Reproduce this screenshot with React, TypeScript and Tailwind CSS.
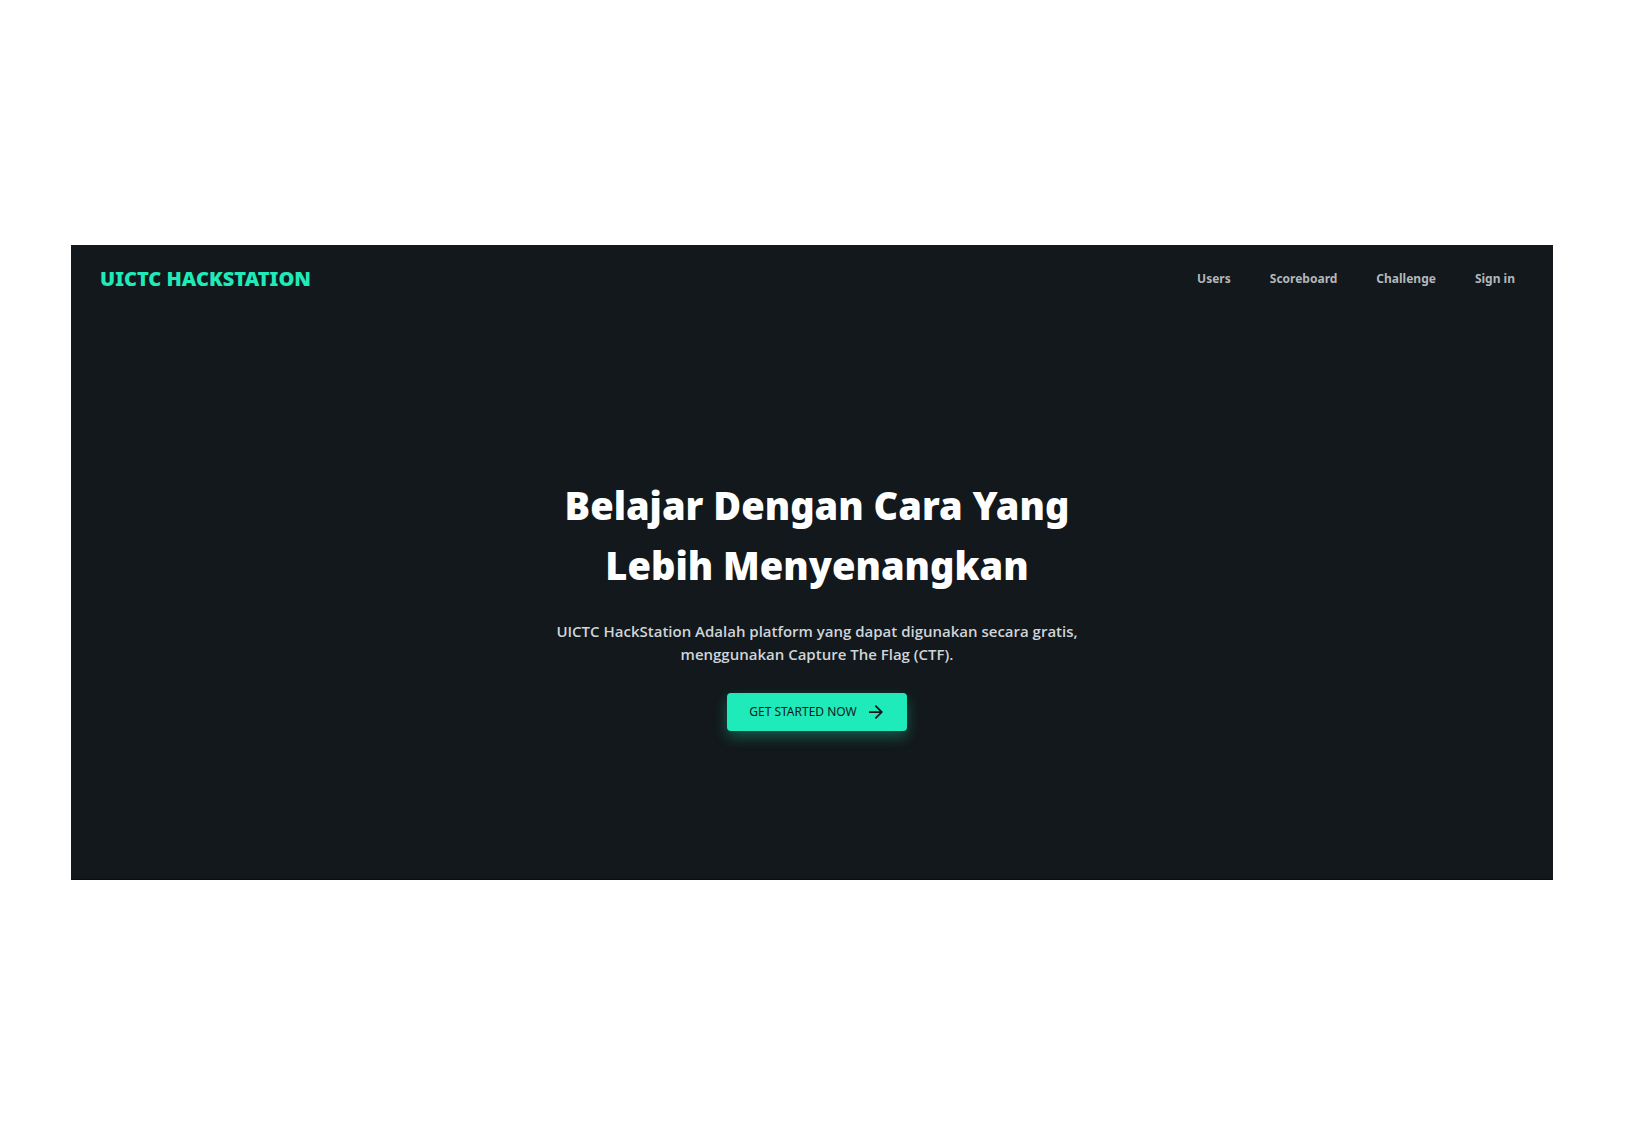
import React from "react";

const links = [
  { label: "Users", href: "#users" },
  { label: "Scoreboard", href: "#scoreboard" },
  { label: "Challenge", href: "#challenge" },
  { label: "Sign in", href: "#sign-in" },
];

function Header() {
  return (
    <header className="flex items-center justify-between pt-5 pr-[38px] pl-[29px]">
      <a href="#home" className="text-xl leading-7 font-black text-[#1eebb9]">
        UICTC HACKSTATION
      </a>
      <nav className="flex gap-[39px] text-xs leading-7 font-bold text-[#b4b7b9]">
        {links.map((link) => (
          <a key={link.href} href={link.href}>
            {link.label}
          </a>
        ))}
      </nav>
    </header>
  );
}

function ArrowIcon() {
  return (
    <svg viewBox="4 4 16 16" className="size-[14px]" fill="currentColor" aria-hidden="true">
      <path d="m12 4-1.41 1.41L16.17 11H4v2h12.17l-5.58 5.59L12 20l8-8z" />
    </svg>
  );
}

function Hero() {
  return (
    <main className="flex flex-col items-center pt-[182px] pb-[148px] pl-2.5 text-center">
      <h1 className="text-[38px] leading-[60px] font-black text-white">
        Belajar Dengan Cara Yang
        <br />
        Lebih Menyenangkan
      </h1>
      <p className="mt-[25px] font-['Open_Sans','Noto_Sans',sans-serif] text-[15px] leading-[23px] font-semibold text-[#d0d4d8]">
        UICTC HackStation Adalah platform yang dapat digunakan secara gratis,
        <br />
        menggunakan Capture The Flag (CTF).
      </p>
      <button
        type="button"
        className="mt-[27px] flex h-[38px] items-center gap-3 rounded pr-6 pl-[22px] text-xs text-[#12181b] bg-[#1eebb9] shadow-[0_6px_14px_rgba(30,235,185,0.3)]"
      >
        GET STARTED NOW
        <ArrowIcon />
      </button>
    </main>
  );
}

export default function App() {
  return (
    <div className="flex min-h-screen flex-col justify-center bg-white pr-[72px] pl-[71px] font-['Noto_Sans','Open_Sans',sans-serif]">
      <div className="border-b border-[#0b0b12] bg-[#12181b]">
        <Header />
        <Hero />
      </div>
    </div>
  );
}
